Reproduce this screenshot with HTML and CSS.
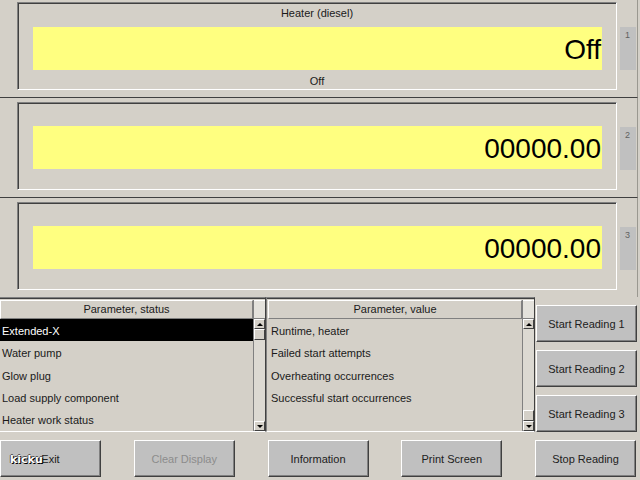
FILE: index.html
```html
<!DOCTYPE html>
<html>
<head>
<meta charset="utf-8">
<link rel="stylesheet" href="styles.css">
</head>
<body>
<div class="screen">
  <div class="panels">
    <div class="panel">
      <div class="frame">
        <div class="caption">Heater (diesel)</div>
        <div class="display">Off</div>
        <div class="caption caption-bottom">Off</div>
      </div>
      <div class="tab">1</div>
    </div>
    <div class="panel">
      <div class="frame">
        <div class="caption"></div>
        <div class="display">00000.00</div>
        <div class="caption caption-bottom"></div>
      </div>
      <div class="tab">2</div>
    </div>
    <div class="panel">
      <div class="frame">
        <div class="caption"></div>
        <div class="display">00000.00</div>
        <div class="caption caption-bottom"></div>
      </div>
      <div class="tab">3</div>
    </div>
  </div>

  <div class="lower">
    <div class="list list-status">
      <div class="list-main">
        <div class="list-header">Parameter, status</div>
        <div class="row selected">Extended-X</div>
        <div class="row">Water pump</div>
        <div class="row">Glow plug</div>
        <div class="row">Load supply component</div>
        <div class="row">Heater work status</div>
      </div>
      <div class="scrollbar">
        <div class="sb-head"></div>
        <div class="sb-btn"><span class="arrow-up"></span></div>
        <div class="sb-thumb"></div>
        <div class="sb-track"></div>
        <div class="sb-btn"><span class="arrow-down"></span></div>
      </div>
    </div>
    <div class="list list-value">
      <div class="list-main">
        <div class="list-header">Parameter, value</div>
        <div class="row">Runtime, heater</div>
        <div class="row">Failed start attempts</div>
        <div class="row">Overheating occurrences</div>
        <div class="row">Successful start occurrences</div>
      </div>
      <div class="scrollbar">
        <div class="sb-head"></div>
        <div class="sb-btn"><span class="arrow-up"></span></div>
        <div class="sb-track"></div>
        <div class="sb-thumb"></div>
        <div class="sb-btn"><span class="arrow-down"></span></div>
      </div>
    </div>
    <div class="side-buttons">
      <div class="btn">Start Reading 1</div>
      <div class="btn">Start Reading 2</div>
      <div class="btn">Start Reading 3</div>
    </div>
  </div>

  <div class="bottom-buttons">
    <div class="btn">Exit</div>
    <div class="btn disabled">Clear Display</div>
    <div class="btn">Information</div>
    <div class="btn">Print Screen</div>
    <div class="btn">Stop Reading</div>
  </div>
  <div class="watermark">kicku</div>
</div>
</body>
</html>
```
FILE: styles.css
```css
html, body {
  margin: 0;
  padding: 0;
}
body {
  background: #d4d0c8;
  font-family: "Liberation Sans", Arial, sans-serif;
  font-size: 11px;
  color: #000;
}
.screen {
  position: relative;
  width: 640px;
  height: 480px;
  overflow: hidden;
}

/* ---------- display panels ---------- */
.panels {
  margin-top: -3px;
}
.panel {
  box-sizing: border-box;
  height: 100px;
  border-top: 1px solid #404040;
  border-right: 1px solid #9a9890;
  width: 638px;
  display: flex;
  align-items: flex-start;
  padding: 4px 0 0 17px;
}
.frame {
  box-sizing: border-box;
  width: 600px;
  height: 88px;
  border: 1px solid;
  border-color: #808080 #ffffff #ffffff #808080;
  box-shadow: inset 1px 1px 0 #404040, inset -1px -1px 0 #d4d0c8;
  padding: 1px;
  display: flex;
  flex-direction: column;
}
.caption {
  height: 18px;
  line-height: 18px;
  text-align: center;
  font-size: 11px;
  color: #1a1a1a;
}
.display {
  margin: 5px 13px 0 14px;
  height: 43px;
  background: #ffff80;
  display: flex;
  align-items: center;
  justify-content: flex-end;
  font-size: 28px;
  line-height: 43px;
  padding-right: 1px;
  padding-top: 1px;
  box-sizing: border-box;
}
.caption-bottom {
  margin-top: 2px;
}
.tab {
  box-sizing: border-box;
  margin: 25px 0 0 3px;
  width: 16px;
  height: 43px;
  background: #c0c0c0;
  color: #606060;
  font-size: 9px;
  padding: 3px 0 0 5px;
}

/* ---------- lists ---------- */
.lower {
  display: flex;
  height: 135px;
}
.list {
  box-sizing: border-box;
  display: flex;
  height: 135px;
  border-top: 1px solid #808080;
  border-bottom: 1px solid #ffffff;
  padding-top: 2px;
  box-shadow: inset 0 1px 0 #404040;
}
.list-status {
  width: 266px;
  border-right: 1px solid #404040;
}
.list-value {
  width: 269px;
  border-left: 1px solid #808080;
  border-right: 1px solid #404040;
  padding-left: 1px;
}
.list-main {
  flex: 1;
  display: flex;
  flex-direction: column;
  min-width: 0;
}
.list-header {
  box-sizing: border-box;
  height: 19px;
  line-height: 17px;
  text-align: center;
  border: 1px solid;
  border-color: #ffffff #808080 #808080 #ffffff;
  color: #1a1a1a;
}
.row {
  box-sizing: border-box;
  height: 22.25px;
  line-height: 22.25px;
  padding: 1px 0 0 2px;
  white-space: nowrap;
  color: #1a1a1a;
}
.list-value .row {
  padding-left: 3px;
}
.row.selected {
  background: #000;
  color: #fff;
}
.scrollbar {
  width: 11px;
  display: flex;
  flex-direction: column;
  border-left: 1px solid #808080;
}
.sb-head {
  box-sizing: border-box;
  height: 19px;
  border-top: 1px solid #fff;
  border-bottom: 1px solid #808080;
  background: #e4e2dc;
}
.sb-btn {
  box-sizing: border-box;
  height: 10px;
  border: 1px solid;
  border-color: #ffffff #404040 #404040 #ffffff;
  background: #d4d0c8;
  display: flex;
  align-items: center;
  justify-content: center;
}
.sb-thumb {
  box-sizing: border-box;
  height: 11px;
  border: 1px solid;
  border-color: #ffffff #404040 #404040 #ffffff;
  background: #d4d0c8;
}
.sb-track {
  flex: 1;
  background: #dcd9d2;
}
.arrow-up {
  width: 0;
  height: 0;
  border-left: 3px solid transparent;
  border-right: 3px solid transparent;
  border-bottom: 3px solid #000;
}
.arrow-down {
  width: 0;
  height: 0;
  border-left: 3px solid transparent;
  border-right: 3px solid transparent;
  border-top: 3px solid #000;
}

/* ---------- buttons ---------- */
.btn {
  box-sizing: border-box;
  width: 101px;
  height: 37px;
  background: #c0c0c0;
  border: 1px solid;
  border-color: #ffffff #404040 #404040 #ffffff;
  box-shadow: inset -1px -1px 0 #808080;
  display: flex;
  align-items: center;
  justify-content: center;
  font-size: 11px;
  color: #202020;
}
.btn.disabled {
  color: #8c8c8c;
}
.side-buttons {
  margin-left: 1px;
  padding-top: 8px;
  display: flex;
  flex-direction: column;
  gap: 8px;
}
.bottom-buttons {
  width: 636px;
  margin-top: 8px;
  display: flex;
  justify-content: space-between;
}
.watermark {
  position: absolute;
  left: 10px;
  top: 453px;
  color: #ffffff;
  font-family: "DejaVu Sans", sans-serif;
  font-weight: bold;
  font-size: 11px;
  text-shadow: 1px 1px 0 #000, -1px 0 0 #555, 0 -1px 0 #555;
}
```
